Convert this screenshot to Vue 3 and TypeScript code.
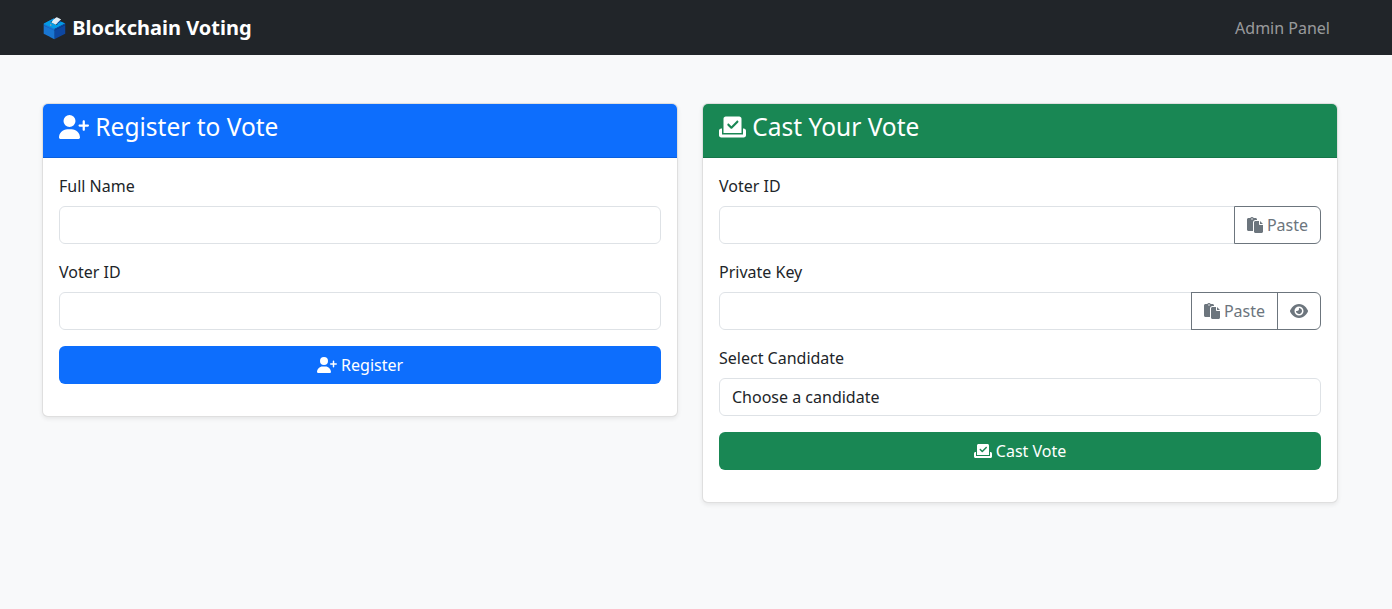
<template>
  <div class="page">
    <nav class="navbar">
      <a class="brand">🗳️ Blockchain Voting</a>
      <a class="nav-link">Admin Panel</a>
    </nav>

    <main class="columns">
      <section class="card">
        <div class="card-header primary">
          <h4>
            <svg class="icon" viewBox="0 0 640 512"><path :d="userPlus" /></svg>
            Register to Vote
          </h4>
        </div>
        <div class="card-body">
          <div class="field">
            <label for="reg-name">Full Name</label>
            <input id="reg-name" v-model="fullName" class="control" type="text" />
          </div>
          <div class="field">
            <label for="reg-id">Voter ID</label>
            <input id="reg-id" v-model="regVoterId" class="control" type="text" />
          </div>
          <button class="btn-block primary" type="button">
            <svg class="icon" viewBox="0 0 640 512"><path :d="userPlus" /></svg>
            Register
          </button>
        </div>
      </section>

      <section class="card">
        <div class="card-header success">
          <h4>
            <svg class="icon slot" viewBox="0 0 576 512"><path :d="checkToSlot" /></svg>
            Cast Your Vote
          </h4>
        </div>
        <div class="card-body">
          <div class="field">
            <label for="vote-id">Voter ID</label>
            <div class="input-group">
              <input id="vote-id" v-model="voteVoterId" class="control" type="text" />
              <button class="btn-outline" type="button">
                <svg class="icon paste" viewBox="0 0 512 512"><path :d="paste" /></svg>
                Paste
              </button>
            </div>
          </div>
          <div class="field">
            <label for="vote-key">Private Key</label>
            <div class="input-group">
              <input id="vote-key" v-model="privateKey" class="control" :type="showKey ? 'text' : 'password'" />
              <button class="btn-outline" type="button">
                <svg class="icon paste" viewBox="0 0 512 512"><path :d="paste" /></svg>
                Paste
              </button>
              <button class="btn-outline" type="button" @click="showKey = !showKey">
                <svg class="icon slot" viewBox="0 0 576 512"><path :d="eye" /></svg>
              </button>
            </div>
          </div>
          <div class="field">
            <label for="vote-candidate">Select Candidate</label>
            <select id="vote-candidate" class="control select">
              <option>Choose a candidate</option>
            </select>
          </div>
          <button class="btn-block success" type="button">
            <svg class="icon slot" viewBox="0 0 576 512"><path :d="checkToSlot" /></svg>
            Cast Vote
          </button>
        </div>
      </section>
    </main>
  </div>
</template>

<script setup lang="ts">
import { ref } from 'vue';

const fullName = ref('');
const regVoterId = ref('');
const voteVoterId = ref('');
const privateKey = ref('');
const showKey = ref(false);

const userPlus =
  'M96 128a128 128 0 1 1 256 0A128 128 0 1 1 96 128zM0 482.3C0 383.8 79.8 304 178.3 304h91.4C368.2 304 448 383.8 448 482.3c0 16.4-13.3 29.7-29.7 29.7H29.7C13.3 512 0 498.7 0 482.3zM504 312V248H440c-13.3 0-24-10.7-24-24s10.7-24 24-24h64V136c0-13.3 10.7-24 24-24s24 10.7 24 24v64h64c13.3 0 24 10.7 24 24s-10.7 24-24 24H552v64c0 13.3-10.7 24-24 24s-24-10.7-24-24z';
const checkToSlot =
  'M96 80c0-26.5 21.5-48 48-48H432c26.5 0 48 21.5 48 48V384H96V80zm313 47c-9.4-9.4-24.6-9.4-33.9 0l-111 111-47-47c-9.4-9.4-24.6-9.4-33.9 0s-9.4 24.6 0 33.9l64 64c9.4 9.4 24.6 9.4 33.9 0L409 161c9.4-9.4 9.4-24.6 0-33.9zM0 336c0-26.5 21.5-48 48-48H64V416H512V288h16c26.5 0 48 21.5 48 48v96c0 26.5-21.5 48-48 48H48c-26.5 0-48-21.5-48-48V336z';
const paste =
  'M160 0c-23.7 0-44.4 12.9-55.4 32H48C21.5 32 0 53.5 0 80V400c0 26.5 21.5 48 48 48H192V176c0-44.2 35.8-80 80-80h48V80c0-26.5-21.5-48-48-48H215.4C204.4 12.9 183.7 0 160 0zM272 128c-26.5 0-48 21.5-48 48V464c0 26.5 21.5 48 48 48H464c26.5 0 48-21.5 48-48V256H416c-17.7 0-32-14.3-32-32V128H272zM416 128v96h96L416 128zM160 40a24 24 0 1 1 0 48 24 24 0 1 1 0-48z';
const eye =
  'M288 32c-80.8 0-145.5 36.8-192.6 80.6C48.6 156 17.3 208 2.5 243.7c-3.3 7.9-3.3 16.7 0 24.6C17.3 304 48.6 356 95.4 399.4C142.5 443.2 207.2 480 288 480s145.5-36.8 192.6-80.6c46.8-43.5 78.1-95.4 93-131.1c3.3-7.9 3.3-16.7 0-24.6c-14.9-35.7-46.2-87.7-93-131.1C433.5 68.8 368.8 32 288 32zM144 256a144 144 0 1 1 288 0 144 144 0 1 1 -288 0zm144-64c0 35.3-28.7 64-64 64c-7.1 0-13.9-1.2-20.3-3.3c-5.5-1.8-11.9 1.6-11.7 7.4c.3 6.9 1.3 13.8 3.2 20.7c13.7 51.2 66.4 81.6 117.6 67.9s81.6-66.4 67.9-117.6c-11.1-41.5-47.8-69.4-88.6-71.1c-5.8-.2-9.2 6.1-7.4 11.7c2.1 6.4 3.3 13.2 3.3 20.3z';
</script>

<style>
html,
body {
  margin: 0;
  background: #f8f9fa;
}
</style>

<style scoped>
.page {
  min-height: 609px;
  background: #f8f9fa;
  color: #212529;
  font-family: 'Noto Sans', sans-serif;
  font-size: 16px;
  line-height: 24px;
}

.navbar {
  display: flex;
  align-items: center;
  justify-content: space-between;
  height: 55px;
  padding: 0 62px 0 42px;
  background: #212529;
}

.brand {
  color: #fff;
  font-size: 20px;
  font-weight: 700;
}

.nav-link {
  color: rgba(255, 255, 255, 0.55);
}

.columns {
  display: grid;
  grid-template-columns: 636px 636px;
  gap: 24px;
  align-items: start;
  padding: 48px 0 0 42px;
}

.card {
  background: #fff;
  border: 1px solid rgba(0, 0, 0, 0.125);
  border-radius: 6px;
  box-shadow: 0 2px 4px rgba(0, 0, 0, 0.075);
  overflow: hidden;
}

.card-header {
  padding: 8px 16px;
  color: #fff;
  border-bottom: 1px solid rgba(0, 0, 0, 0.125);
}

.card-header h4 {
  margin: 0 0 8px;
  font-size: 24.5px;
  font-weight: 400;
  line-height: 29px;
}

.card-header h4 .icon {
  font-size: 24px;
}

.primary {
  background: #0d6efd;
}

.success {
  background: #198754;
}

.card-body {
  padding: 16px 16px 32px;
}

.field {
  margin-bottom: 16px;
}

label {
  display: block;
  margin-bottom: 8px;
}

.control {
  display: block;
  box-sizing: border-box;
  width: 100%;
  height: 38px;
  padding: 6px 12px;
  background: #fff;
  border: 1px solid #dee2e6;
  border-radius: 6px;
  color: #212529;
  font: inherit;
}

.select {
  appearance: none;
}

.input-group {
  display: flex;
}

.input-group .control {
  flex: 1;
  min-width: 0;
  border-radius: 6px 0 0 6px;
}

.btn-outline {
  flex: none;
  height: 38px;
  margin-left: -1px;
  padding: 6px 12px;
  background: transparent;
  border: 1px solid #6c757d;
  color: #6c757d;
  font: inherit;
  cursor: pointer;
}

.btn-outline:last-child {
  border-radius: 0 6px 6px 0;
}

.btn-block {
  display: block;
  box-sizing: border-box;
  width: 100%;
  height: 38px;
  padding: 6px 12px;
  border: 1px solid transparent;
  border-radius: 6px;
  color: #fff;
  font: inherit;
  text-align: center;
  cursor: pointer;
}

.icon {
  display: inline-block;
  width: 1.25em;
  height: 1em;
  vertical-align: -0.125em;
  fill: currentColor;
}

.icon.paste {
  width: 1em;
}

.icon.slot {
  width: 1.125em;
}
</style>
